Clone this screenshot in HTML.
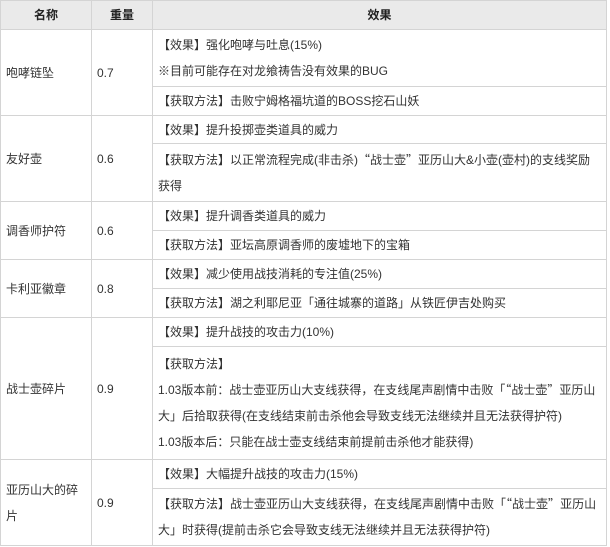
<!DOCTYPE html>
<html><head><meta charset="utf-8"><style>
*{margin:0;padding:0;box-sizing:border-box}
body{width:610px;height:547px;background:#fff;font-family:"Liberation Sans","Noto Sans CJK SC",sans-serif;font-size:12px;color:#333;position:relative;overflow:hidden}
.c{position:absolute;border:1px solid #d4d4d4;display:flex;align-items:center;padding-left:5px;line-height:26px}
.h{background:#eaeaea;justify-content:center;font-weight:bold;padding:0;color:#222}
.q{font-family:"Noto Sans CJK SC",sans-serif}
</style></head><body>
<div class="c h" style="left:0;top:0;width:92px;height:30px">名称</div>
<div class="c h" style="left:91px;top:0;width:62px;height:30px">重量</div>
<div class="c h" style="left:152px;top:0;width:455px;height:30px">效果</div>

<div class="c" style="left:0;top:29px;width:92px;height:87px">咆哮链坠</div>
<div class="c" style="left:91px;top:29px;width:62px;height:87px">0.7</div>
<div class="c" style="left:152px;top:29px;width:455px;height:58px"><div>【效果】强化咆哮与吐息(15%)<br>※目前可能存在对龙飨祷告没有效果的BUG</div></div>
<div class="c" style="left:152px;top:86px;width:455px;height:30px">【获取方法】击败宁姆格福坑道的BOSS挖石山妖</div>

<div class="c" style="left:0;top:115px;width:92px;height:87px">友好壶</div>
<div class="c" style="left:91px;top:115px;width:62px;height:87px">0.6</div>
<div class="c" style="left:152px;top:115px;width:455px;height:29px">【效果】提升投掷壶类道具的威力</div>
<div class="c" style="left:152px;top:143px;width:455px;height:59px"><div>【获取方法】以正常流程完成(非击杀)<span class="q">“</span>战士壶<span class="q">”</span>亚历山大&amp;小壶(壶村)的支线奖励<br>获得</div></div>

<div class="c" style="left:0;top:201px;width:92px;height:59px">调香师护符</div>
<div class="c" style="left:91px;top:201px;width:62px;height:59px">0.6</div>
<div class="c" style="left:152px;top:201px;width:455px;height:30px">【效果】提升调香类道具的威力</div>
<div class="c" style="left:152px;top:230px;width:455px;height:30px">【获取方法】亚坛高原调香师的废墟地下的宝箱</div>

<div class="c" style="left:0;top:259px;width:92px;height:59px">卡利亚徽章</div>
<div class="c" style="left:91px;top:259px;width:62px;height:59px">0.8</div>
<div class="c" style="left:152px;top:259px;width:455px;height:30px">【效果】减少使用战技消耗的专注值(25%)</div>
<div class="c" style="left:152px;top:288px;width:455px;height:30px">【获取方法】湖之利耶尼亚「通往城寨的道路」从铁匠伊吉处购买</div>

<div class="c" style="left:0;top:317px;width:92px;height:143px">战士壶碎片</div>
<div class="c" style="left:91px;top:317px;width:62px;height:143px">0.9</div>
<div class="c" style="left:152px;top:317px;width:455px;height:30px">【效果】提升战技的攻击力(10%)</div>
<div class="c" style="left:152px;top:346px;width:455px;height:114px"><div>【获取方法】<br>1.03版本前：战士壶亚历山大支线获得，在支线尾声剧情中击败「<span class="q">“</span>战士壶<span class="q">”</span>亚历山<br>大」后拾取获得(在支线结束前击杀他会导致支线无法继续并且无法获得护符)<br>1.03版本后：只能在战士壶支线结束前提前击杀他才能获得)</div></div>

<div class="c" style="left:0;top:459px;width:92px;height:87px"><div>亚历山大的碎<br>片</div></div>
<div class="c" style="left:91px;top:459px;width:62px;height:87px">0.9</div>
<div class="c" style="left:152px;top:459px;width:455px;height:30px">【效果】大幅提升战技的攻击力(15%)</div>
<div class="c" style="left:152px;top:488px;width:455px;height:58px"><div>【获取方法】战士壶亚历山大支线获得，在支线尾声剧情中击败「<span class="q">“</span>战士壶<span class="q">”</span>亚历山<br>大」时获得(提前击杀它会导致支线无法继续并且无法获得护符)</div></div>
</body></html>
